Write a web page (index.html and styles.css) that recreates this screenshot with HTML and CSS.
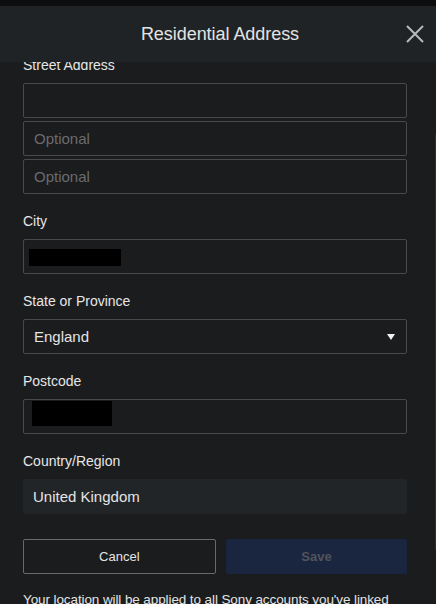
FILE: index.html
```html
<!DOCTYPE html>
<html lang="en">
<head>
<meta charset="utf-8">
<title>Residential Address</title>
<link rel="stylesheet" href="styles.css">
</head>
<body>
<div class="topstrip"></div>
<div class="modal">
  <header class="modal-header">
    <span></span>
    <h1 class="modal-title">Residential Address</h1>
    <button class="close" aria-label="Close">
      <svg width="18" height="18" viewBox="0 0 18 18"><path d="M1 1 L17 17 M17 1 L1 17" stroke="#b8b9ba" stroke-width="2" fill="none"/></svg>
    </button>
  </header>
  <div class="modal-body">
    <div class="scrollthumb"></div>
    <form class="form">
      <div class="group first">
        <label class="label">Street Address</label>
        <div class="stack">
          <div class="field"></div>
          <div class="field"><span class="placeholder">Optional</span></div>
          <div class="field"><span class="placeholder">Optional</span></div>
        </div>
      </div>
      <div class="group">
        <label class="label">City</label>
        <div class="field"><span class="redact redact-city"></span></div>
      </div>
      <div class="group">
        <label class="label">State or Province</label>
        <div class="field select"><span class="value">England</span><span class="caret"></span></div>
      </div>
      <div class="group">
        <label class="label">Postcode</label>
        <div class="field"><span class="redact redact-post"></span></div>
      </div>
      <div class="group">
        <label class="label">Country/Region</label>
        <div class="readonly">United Kingdom</div>
      </div>
      <div class="actions">
        <button type="button" class="btn btn-cancel">Cancel</button>
        <button type="button" class="btn btn-save">Save</button>
      </div>
      <p class="note">Your location will be applied to all Sony accounts you've linked with this account.</p>
    </form>
  </div>
</div>
</body>
</html>
```
FILE: styles.css
```css
* { box-sizing: border-box; }
html, body { margin: 0; padding: 0; }
body {
  background: #1b1c1e;
  font-family: "Liberation Sans", Arial, sans-serif;
  color: #e4e4e4;
  width: 436px;
  height: 604px;
  overflow: hidden;
}
.topstrip {
  height: 6px;
  background: #0c0d0e;
}
.modal {
  display: flex;
  flex-direction: column;
  height: 598px;
}
.modal-header {
  position: relative;
  z-index: 2;
  height: 56px;
  flex: none;
  background: #202326;
  display: grid;
  grid-template-columns: 1fr auto 1fr;
  align-items: center;
  padding: 0 12px 0 16px;
}
.modal-title {
  margin: 0;
  font-size: 18px;
  font-weight: normal;
  color: #e3e3e3;
  letter-spacing: -0.05px;
}
.close {
  justify-self: end;
  background: none;
  border: 0;
  padding: 0;
  width: 18px;
  height: 18px;
  display: block;
}
.close svg { display: block; }
.modal-body {
  position: relative;
  flex: 1;
  overflow: hidden;
}
.scrollthumb {
  position: absolute;
  right: 0;
  top: 72px;
  width: 1px;
  height: 416px;
  background: #2d2e31;
}
.form {
  padding: 0 29px 0 23px;
  margin-top: -6px;
}
.group { margin-top: 18px; }
.group.first { margin-top: 0; }
.label {
  display: block;
  font-size: 14px;
  line-height: 18px;
  color: #e6e6e6;
  margin-bottom: 9px;
}
.stack {
  display: flex;
  flex-direction: column;
  gap: 3px;
}
.field {
  height: 35px;
  border: 1px solid #47494c;
  border-radius: 2px;
  display: flex;
  align-items: center;
  padding: 0 10px;
  font-size: 15px;
  position: relative;
}
.placeholder { color: #6a6b6e; }
.value { color: #e4e4e4; flex: 1; }
.caret {
  width: 0;
  height: 0;
  border-left: 4px solid transparent;
  border-right: 4px solid transparent;
  border-top: 6px solid #f2f2f2;
  margin-right: 1px;
}
.redact { display: block; background: #000; }
.redact-city {
  width: 92px;
  height: 17px;
  margin-left: -5px;
  margin-top: 1px;
}
.redact-post {
  width: 80px;
  height: 25px;
  margin-left: -2px;
  margin-top: -6px;
}
.readonly {
  height: 35px;
  background: #222528;
  border-radius: 2px;
  display: flex;
  align-items: center;
  padding: 0 10px;
  font-size: 15px;
  color: #e4e4e4;
}
.actions {
  margin-top: 24.6px;
  display: grid;
  grid-template-columns: 192.7px 1fr;
  gap: 10.3px;
}
.btn {
  height: 35.4px;
  border-radius: 2px;
  font-family: "Liberation Sans", Arial, sans-serif;
  font-size: 13px;
  padding: 0;
}
.btn-cancel {
  background: transparent;
  border: 1px solid #68696c;
  color: #e4e4e4;
}
.btn-save {
  background: #1a2540;
  border: 0;
  color: #50545c;
  font-weight: bold;
}
.note {
  margin: 17px 0 0;
  font-size: 13.5px;
  letter-spacing: -0.1px;
  line-height: 18px;
  color: #e4e4e4;
}
```
